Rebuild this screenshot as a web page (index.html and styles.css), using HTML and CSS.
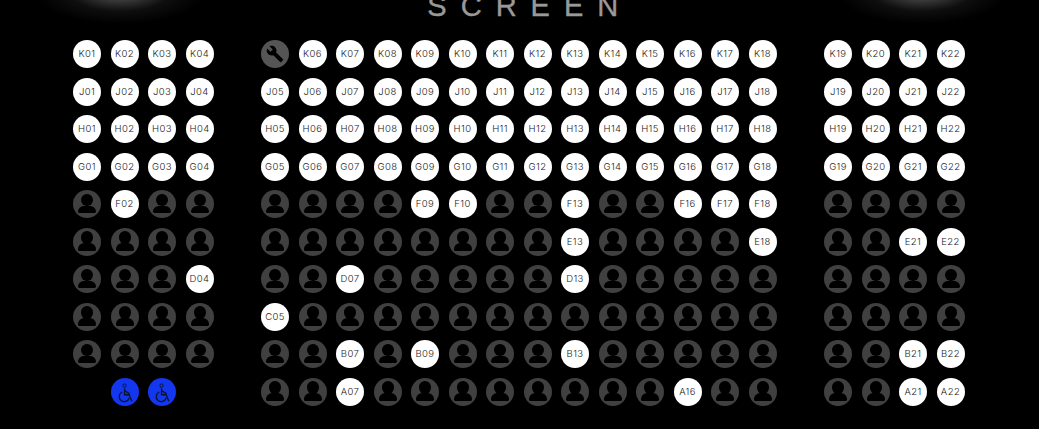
FILE: index.html
```html
<!DOCTYPE html>
<html lang="en">
<head>
<meta charset="utf-8">
<title>Seats</title>
<link rel="stylesheet" href="styles.css">
</head>
<body>
<div class="glow glow-left"></div>
<div class="glow glow-right"></div>
<header class="screen"><span class="screen-label">SCREEN</span></header>
<main class="hall">
<section class="block block-side">
<div class="seat">K01</div><div class="seat">K02</div><div class="seat">K03</div><div class="seat">K04</div>
<div class="seat">J01</div><div class="seat">J02</div><div class="seat">J03</div><div class="seat">J04</div>
<div class="seat">H01</div><div class="seat">H02</div><div class="seat">H03</div><div class="seat">H04</div>
<div class="seat">G01</div><div class="seat">G02</div><div class="seat">G03</div><div class="seat">G04</div>
<div class="seat off"></div><div class="seat">F02</div><div class="seat off"></div><div class="seat off"></div>
<div class="seat off"></div><div class="seat off"></div><div class="seat off"></div><div class="seat off"></div>
<div class="seat off"></div><div class="seat off"></div><div class="seat off"></div><div class="seat">D04</div>
<div class="seat off"></div><div class="seat off"></div><div class="seat off"></div><div class="seat off"></div>
<div class="seat off"></div><div class="seat off"></div><div class="seat off"></div><div class="seat off"></div>
<div class="gap"></div>
<div class="seat access"><svg class="icon" viewBox="0 -1.500 24 24"><circle cx="11.5" cy="3.5" r="1.8"/><path d="M11.5 6.500v7h5l3 7M11.500 9l5.500 3.500M9 10.500a5.500 5.500 0 1 0 7.500 6.500"/></svg></div>
<div class="seat access"><svg class="icon" viewBox="0 -1.500 24 24"><circle cx="11.5" cy="3.5" r="1.8"/><path d="M11.5 6.500v7h5l3 7M11.500 9l5.500 3.500M9 10.500a5.500 5.500 0 1 0 7.500 6.500"/></svg></div>
<div class="gap"></div>
</section>
<section class="block block-main">
<div class="seat tool"><svg class="wrench" viewBox="0 0 24 24"><path d="M22.700 19l-9.100-9.100c.9-2.300.4-5-1.500-6.900-2-2-5-2.400-7.400-1.300L9 6 6 9 1.600 4.700C.4 7.100.9 10.100 2.900 12.100c1.900 1.900 4.600 2.400 6.900 1.500l9.100 9.100c.4.400 1 .4 1.400 0l2.300-2.300c.5-.4.500-1.100.1-1.400z"/></svg></div>
<div class="seat">K06</div><div class="seat">K07</div><div class="seat">K08</div><div class="seat">K09</div><div class="seat">K10</div><div class="seat">K11</div><div class="seat">K12</div><div class="seat">K13</div><div class="seat">K14</div><div class="seat">K15</div><div class="seat">K16</div><div class="seat">K17</div><div class="seat">K18</div>
<div class="seat">J05</div><div class="seat">J06</div><div class="seat">J07</div><div class="seat">J08</div><div class="seat">J09</div><div class="seat">J10</div><div class="seat">J11</div><div class="seat">J12</div><div class="seat">J13</div><div class="seat">J14</div><div class="seat">J15</div><div class="seat">J16</div><div class="seat">J17</div><div class="seat">J18</div>
<div class="seat">H05</div><div class="seat">H06</div><div class="seat">H07</div><div class="seat">H08</div><div class="seat">H09</div><div class="seat">H10</div><div class="seat">H11</div><div class="seat">H12</div><div class="seat">H13</div><div class="seat">H14</div><div class="seat">H15</div><div class="seat">H16</div><div class="seat">H17</div><div class="seat">H18</div>
<div class="seat">G05</div><div class="seat">G06</div><div class="seat">G07</div><div class="seat">G08</div><div class="seat">G09</div><div class="seat">G10</div><div class="seat">G11</div><div class="seat">G12</div><div class="seat">G13</div><div class="seat">G14</div><div class="seat">G15</div><div class="seat">G16</div><div class="seat">G17</div><div class="seat">G18</div>
<div class="seat off"></div><div class="seat off"></div><div class="seat off"></div><div class="seat off"></div><div class="seat">F09</div><div class="seat">F10</div><div class="seat off"></div><div class="seat off"></div><div class="seat">F13</div><div class="seat off"></div><div class="seat off"></div><div class="seat">F16</div><div class="seat">F17</div><div class="seat">F18</div>
<div class="seat off"></div><div class="seat off"></div><div class="seat off"></div><div class="seat off"></div><div class="seat off"></div><div class="seat off"></div><div class="seat off"></div><div class="seat off"></div><div class="seat">E13</div><div class="seat off"></div><div class="seat off"></div><div class="seat off"></div><div class="seat off"></div><div class="seat">E18</div>
<div class="seat off"></div><div class="seat off"></div><div class="seat">D07</div><div class="seat off"></div><div class="seat off"></div><div class="seat off"></div><div class="seat off"></div><div class="seat off"></div><div class="seat">D13</div><div class="seat off"></div><div class="seat off"></div><div class="seat off"></div><div class="seat off"></div><div class="seat off"></div>
<div class="seat">C05</div><div class="seat off"></div><div class="seat off"></div><div class="seat off"></div><div class="seat off"></div><div class="seat off"></div><div class="seat off"></div><div class="seat off"></div><div class="seat off"></div><div class="seat off"></div><div class="seat off"></div><div class="seat off"></div><div class="seat off"></div><div class="seat off"></div>
<div class="seat off"></div><div class="seat off"></div><div class="seat">B07</div><div class="seat off"></div><div class="seat">B09</div><div class="seat off"></div><div class="seat off"></div><div class="seat off"></div><div class="seat">B13</div><div class="seat off"></div><div class="seat off"></div><div class="seat off"></div><div class="seat off"></div><div class="seat off"></div>
<div class="seat off"></div><div class="seat off"></div><div class="seat">A07</div><div class="seat off"></div><div class="seat off"></div><div class="seat off"></div><div class="seat off"></div><div class="seat off"></div><div class="seat off"></div><div class="seat off"></div><div class="seat off"></div><div class="seat">A16</div><div class="seat off"></div><div class="seat off"></div>
</section>
<section class="block block-side">
<div class="seat">K19</div><div class="seat">K20</div><div class="seat">K21</div><div class="seat">K22</div>
<div class="seat">J19</div><div class="seat">J20</div><div class="seat">J21</div><div class="seat">J22</div>
<div class="seat">H19</div><div class="seat">H20</div><div class="seat">H21</div><div class="seat">H22</div>
<div class="seat">G19</div><div class="seat">G20</div><div class="seat">G21</div><div class="seat">G22</div>
<div class="seat off"></div><div class="seat off"></div><div class="seat off"></div><div class="seat off"></div>
<div class="seat off"></div><div class="seat off"></div><div class="seat">E21</div><div class="seat">E22</div>
<div class="seat off"></div><div class="seat off"></div><div class="seat off"></div><div class="seat off"></div>
<div class="seat off"></div><div class="seat off"></div><div class="seat off"></div><div class="seat off"></div>
<div class="seat off"></div><div class="seat off"></div><div class="seat">B21</div><div class="seat">B22</div>
<div class="seat off"></div><div class="seat off"></div><div class="seat">A21</div><div class="seat">A22</div>
</section>
</main>
</body>
</html>
```
FILE: styles.css
```css
* { box-sizing: border-box; }
html, body { margin: 0; height: 100%; }
body {
  position: relative;
  overflow: hidden;
  background: #000;
  font-family: Inter, sans-serif;
}
.glow {
  position: absolute;
  top: -40px;
  width: 170px;
  height: 64px;
  border-radius: 50%;
  background: radial-gradient(closest-side, rgba(150,150,150,.6), rgba(70,70,70,.2) 60%, rgba(0,0,0,0));
}
.glow-left { left: 35px; }
.glow-right { left: 837px; }
.screen {
  height: 17px;
  margin-bottom: 23px;
  display: flex;
  justify-content: center;
  align-items: flex-end;
  overflow: hidden;
}
.screen-label {
  padding-left: 20.6px;
  font-family: "Liberation Sans", sans-serif;
  font-size: 29px;
  line-height: 21px;
  letter-spacing: 14px;
  color: #999;
  -webkit-text-stroke: .4px #999;
  white-space: nowrap;
}
.hall {
  display: flex;
  gap: 47.5px;
  padding-left: 73px;
}
.block {
  display: grid;
  grid-auto-rows: 28px;
  gap: 9.5px;
}
.block-side { grid-template-columns: repeat(4, 28px); }
.block-main { grid-template-columns: repeat(14, 28px); }
.seat {
  position: relative;
  width: 28px;
  height: 28px;
  border-radius: 50%;
  background: #fff;
  color: #222;
  font-size: 9.5px;
  font-weight: 300;
  letter-spacing: .4px;
  line-height: 28px;
  text-align: center;
}
.off { background: #404040; overflow: hidden; }
.off::before {
  content: "";
  position: absolute;
  left: 8px;
  top: 3.500px;
  width: 12px;
  height: 12.500px;
  border-radius: 50%;
  background: #000;
}
.off::after {
  content: "";
  position: absolute;
  left: 5px;
  top: 15.500px;
  width: 18px;
  height: 7.500px;
  border-radius: 8px 8px 2px 2px;
  background: #000;
}
.access { background: #1237ee; display: flex; align-items: center; justify-content: center; }
.icon {
  width: 22px;
  height: 22px;
  fill: none;
  stroke: #0a1030;
  stroke-width: 1.400;
}
.icon circle { stroke-width: 1; }
.tool { background: #555; display: flex; align-items: center; justify-content: center; }
.wrench { width: 18px; height: 18px; fill: #000; }
```
